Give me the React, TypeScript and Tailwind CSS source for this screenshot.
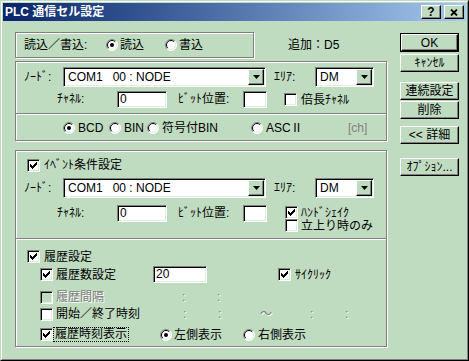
import React from "react";

const raised =
  "bg-[#c0dcc0] border border-t-white border-l-white border-r-black border-b-black shadow-[inset_-1px_-1px_0_#808080]";
const sunken =
  "border border-t-[#808080] border-l-[#808080] border-r-white border-b-white shadow-[inset_1px_1px_0_#000,inset_-1px_-1px_0_#dfeedf]";
const etched = "border border-[#808080] shadow-[inset_1px_1px_0_#fff,1px_1px_0_#fff]";
const grey = "text-[#808080] [text-shadow:1px_1px_0_#fff]";

function Check({ checked, dis, className = "" }: { checked?: boolean; dis?: boolean; className?: string }) {
  return (
    <span
      className={`w-[13px] h-[13px] shrink-0 flex items-center justify-center ${dis ? "bg-[#c0dcc0]" : "bg-white"} ${sunken} ${className}`}
    >
      {checked && (
        <svg width="7" height="7" viewBox="0 0 7 7" shapeRendering="crispEdges">
          {/* classic tick, one column at a time */}
          <rect x="0" y="2" width="1" height="3" />
          <rect x="1" y="3" width="1" height="3" />
          <rect x="2" y="4" width="1" height="3" />
          <rect x="3" y="3" width="1" height="3" />
          <rect x="4" y="2" width="1" height="3" />
          <rect x="5" y="1" width="1" height="3" />
          <rect x="6" y="0" width="1" height="3" />
        </svg>
      )}
    </span>
  );
}

function Radio({ checked, className = "" }: { checked?: boolean; className?: string }) {
  return (
    <svg width="12" height="12" viewBox="0 0 12 12" className={`shrink-0 ${className}`}>
      <circle cx="6" cy="6" r="5.5" fill="#fff" />
      <path d="M2.11 9.89A5.5 5.5 0 0 1 9.89 2.11" fill="none" stroke="#808080" />
      <path d="M2.8 9.2A4.5 4.5 0 0 1 9.2 2.8" fill="none" stroke="#000" />
      <path d="M9.89 2.11A5.5 5.5 0 0 1 2.11 9.89" fill="none" stroke="#fff" />
      <path d="M9.2 2.8A4.5 4.5 0 0 1 2.8 9.2" fill="none" stroke="#dfeedf" />
      {checked && <circle cx="6" cy="6" r="2" fill="#000" />}
    </svg>
  );
}

function Combo({ w, text }: { w: string; text: string }) {
  return (
    <div className={`${w} h-[20px] shrink-0 flex p-px bg-white ${sunken}`}>
      <span className="flex-1 pl-[3px] leading-[16px] whitespace-pre">{text}</span>
      <span className={`w-[16px] h-[16px] flex items-center justify-center ${raised}`}>
        <svg width="7" height="4" viewBox="0 0 7 4">
          <path d="M0 0h7L3.5 4z" fill="#000" />
        </svg>
      </span>
    </div>
  );
}

function Field({ w, text }: { w: string; text: string }) {
  return (
    <div className={`${w} h-[17px] shrink-0 pl-[2px] leading-[15px] bg-white ${sunken}`}>{text}</div>
  );
}

function Btn({ children, className = "" }: { children: React.ReactNode; className?: string }) {
  return (
    <div className={`h-[18px] flex items-center justify-center leading-none ${raised} ${className}`}>
      {children}
    </div>
  );
}

function NodeRow() {
  return (
    <>
      <span className="ml-[8px] w-[39px] shrink-0">ﾉｰﾄﾞ:</span>
      <Combo w="w-[203px]" text="COM1   00 : NODE" />
      <span className="ml-[8px] w-[41px] shrink-0">ｴﾘｱ:</span>
      <Combo w="w-[59px]" text="DM" />
    </>
  );
}

function ChannelCells() {
  return (
    <>
      <span className="ml-[41px] w-[60px] h-[17px] leading-[17px] shrink-0">ﾁｬﾈﾙ:</span>
      <Field w="w-[50px]" text="0" />
      <span className="ml-[11px] w-[65px] h-[17px] leading-[17px] shrink-0">ﾋﾞｯﾄ位置:</span>
      <Field w="w-[24px]" text="" />
    </>
  );
}

export default function App() {
  return (
    <div className="w-[469px] h-[361px] bg-[#c0dcc0] text-[12px] text-black leading-[14px] font-['Liberation_Sans','Noto_Sans_CJK_JP',sans-serif] border border-t-[#c0dcc0] border-l-[#c0dcc0] border-r-black border-b-black">
      <div className="h-full flex flex-col p-px border border-t-white border-l-white border-r-[#808080] border-b-[#808080]">
        {/* title bar */}
        <div className="h-[18px] shrink-0 flex items-center bg-linear-to-r from-[#0a246a] to-[#a6caf0] pr-[2px]">
          <span className="pl-[2px] font-bold text-white">PLC 通信セル設定</span>
          <div className="ml-auto flex gap-[3px]">
            <span className={`w-[20px] h-[14px] flex items-center justify-center font-bold text-[12px] leading-none ${raised}`}>?</span>
            <span className={`w-[20px] h-[14px] flex items-center justify-center ${raised}`}>
              <svg width="8" height="7" viewBox="0 0 8 7">
                <path d="M1 0.5L7 6.5M7 0.5L1 6.5" stroke="#000" strokeWidth="1.8" />
              </svg>
            </span>
          </div>
        </div>

        <div className="flex flex-1">
          {/* left column */}
          <div className="ml-[12px] w-[372px] shrink-0 flex flex-col pt-[11px]">
            <div className="flex items-center h-[26px]">
              <div className={`w-[239px] h-[26px] shrink-0 flex items-center ${etched}`}>
                <span className="ml-[8px] w-[82px] shrink-0">読込／書込:</span>
                <Radio checked />
                <span className="ml-[2px] w-[45px] shrink-0">読込</span>
                <Radio />
                <span className="ml-[2px]">書込</span>
              </div>
              <span className="ml-[34px]">追加：D5</span>
            </div>

            <div className={`mt-[3px] h-[80px] flex flex-col ${etched}`}>
              <div className="mt-[5px] h-[20px] flex items-center">
                <NodeRow />
              </div>
              <div className="mt-[4px] h-[17px] flex items-center">
                <ChannelCells />
                <Check className="ml-[17px]" />
                <span className="ml-[4px]">倍長ﾁｬﾈﾙ</span>
              </div>
              <div className="mt-[5px] border-t border-t-[#808080] border-b border-b-white" />
              <div className="mt-[6px] h-[14px] flex items-center pl-[47px]">
                <div className="w-[46px] flex items-center shrink-0">
                  <Radio checked />
                  <span className="ml-[3px]">BCD</span>
                </div>
                <div className="w-[38px] flex items-center shrink-0">
                  <Radio />
                  <span className="ml-[3px]">BIN</span>
                </div>
                <div className="w-[104px] flex items-center shrink-0">
                  <Radio />
                  <span className="ml-[3px]">符号付BIN</span>
                </div>
                <div className="w-[97px] flex items-center shrink-0">
                  <Radio />
                  <span className="ml-[3px]">ASCⅡ</span>
                </div>
                <span className="text-[#808080]">[ch]</span>
              </div>
            </div>

            <div className={`mt-[9px] h-[197px] flex flex-col ${etched}`}>
              <div className="mt-[7px] h-[14px] flex items-center">
                <Check checked className="ml-[11px]" />
                <span className="ml-[4px]">ｲﾍﾞﾝﾄ条件設定</span>
              </div>
              <div className="mt-[6px] h-[20px] flex items-center">
                <NodeRow />
              </div>
              <div className="mt-[7px] flex items-start">
                <ChannelCells />
                <div className="ml-[18px] mt-px flex flex-col">
                  <div className="h-[13px] flex items-center">
                    <Check checked />
                    <span className="ml-[3px]">ﾊﾝﾄﾞｼｪｲｸ</span>
                  </div>
                  <div className="h-[13px] flex items-center">
                    <Check />
                    <span className="ml-[3px]">立上り時のみ</span>
                  </div>
                </div>
              </div>
              <div className="mt-[6px] border-t border-t-[#808080] border-b border-b-white" />

              <div className="mt-[10px] h-[13px] flex items-center">
                <Check checked className="ml-[11px]" />
                <span className="ml-[4px]">履歴設定</span>
              </div>
              <div className="mt-[3px] h-[17px] flex items-center">
                <Check checked className="ml-[24px]" />
                <span className="ml-[3px] w-[97px] shrink-0">履歴数設定</span>
                <Field w="w-[54px]" text="20" />
                <Check checked className="ml-[71px]" />
                <span className="ml-[4px]">ｻｲｸﾘｯｸ</span>
              </div>
              <div className="mt-[7px] h-[14px] flex items-center">
                <Check dis className="ml-[24px]" />
                <span className={`ml-[3px] w-[126px] shrink-0 ${grey}`}>履歴間隔</span>
                <span className={`w-[35px] shrink-0 ${grey}`}>:</span>
                <span className={grey}>:</span>
              </div>
              <div className="mt-[3px] h-[14px] flex items-center">
                <Check className="ml-[24px]" />
                <span className="ml-[3px] w-[127px] shrink-0">開始／終了時刻</span>
                <span className={`w-[35px] shrink-0 ${grey}`}>:</span>
                <span className={`w-[42px] shrink-0 ${grey}`}>:</span>
                <span className={`w-[50px] shrink-0 ${grey}`}>～</span>
                <span className={`w-[35px] shrink-0 ${grey}`}>:</span>
                <span className={grey}>:</span>
              </div>
              <div className="mt-[6px] h-[15px] flex items-center">
                <Check checked className="ml-[24px]" />
                <span className="h-[15px] px-px leading-[13px] border border-dotted border-black">履歴時刻表示</span>
                <Radio checked className="ml-[31px]" />
                <span className="ml-[2px] w-[48px] shrink-0">左側表示</span>
                <Radio className="ml-[21px]" />
                <span className="ml-[3px]">右側表示</span>
              </div>
            </div>
          </div>

          {/* right column: buttons */}
          <div className="ml-[13px] w-[59px] shrink-0 flex flex-col pt-[12px]">
            <div className="h-[19px] border border-black flex">
              <div className={`flex-1 flex items-center justify-center leading-none ${raised}`}>OK</div>
            </div>
            <Btn className="mt-[2px]">ｷｬﾝｾﾙ</Btn>
            <Btn className="mt-[10px]">連続設定</Btn>
            <Btn className="mt-px">削除</Btn>
            <Btn className="mt-[7px]">&lt;&lt; 詳細</Btn>
            <Btn className="mt-[14px]">ｵﾌﾟｼｮﾝ...</Btn>
          </div>
        </div>
      </div>
    </div>
  );
}
